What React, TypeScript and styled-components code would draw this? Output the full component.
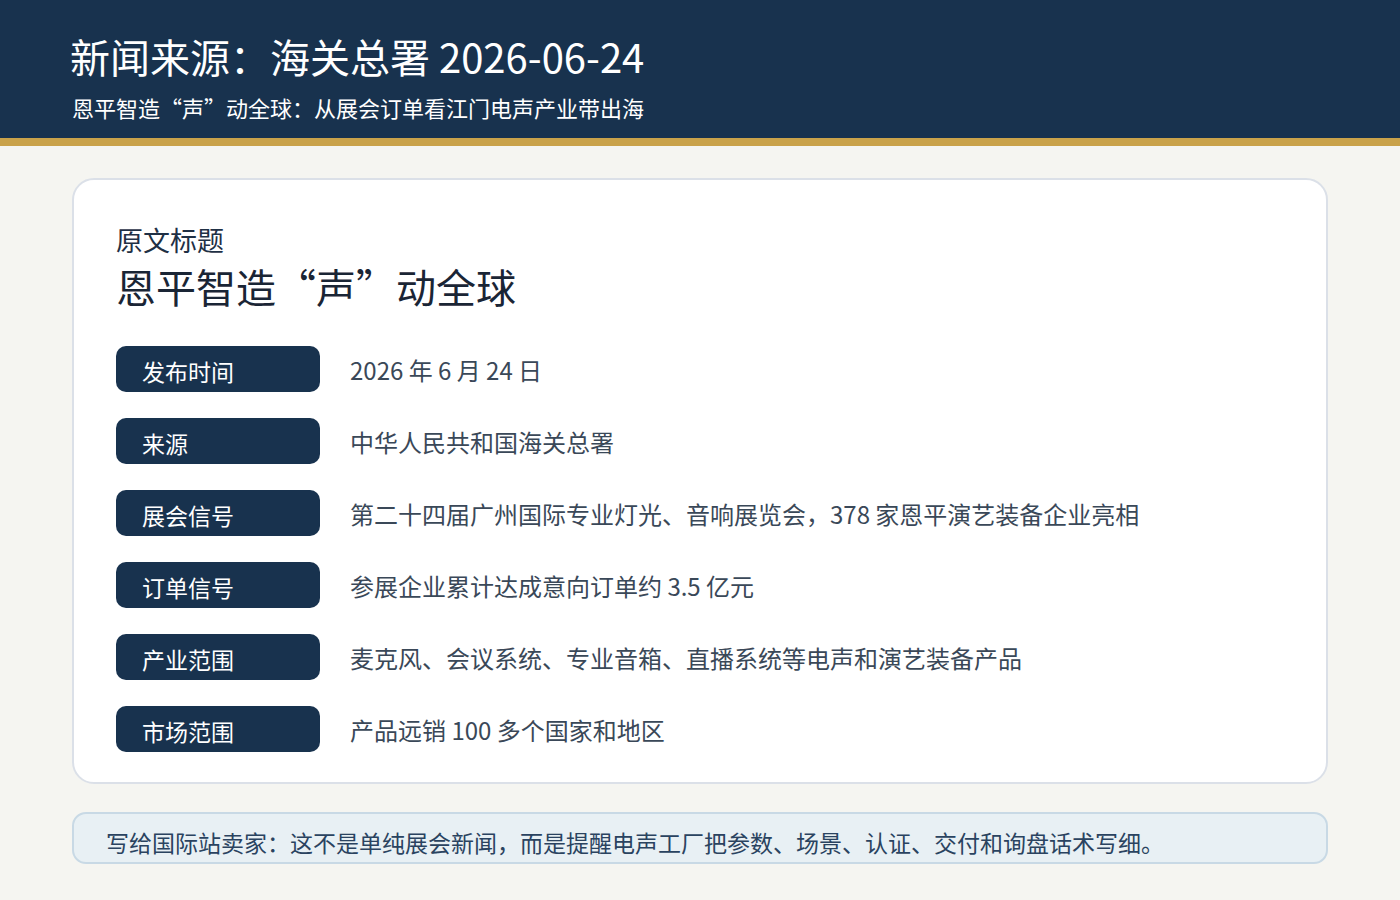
import React from 'react';
import styled, { createGlobalStyle } from 'styled-components';

const GlobalStyle = createGlobalStyle`
  * { box-sizing: border-box; }
  body {
    margin: 0;
    background: #f5f5f1;
    font-family: "Noto Sans CJK SC", "Noto Sans", sans-serif;
  }
`;

const rows: [string, string][] = [
  ['发布时间', '2026 年 6 月 24 日'],
  ['来源', '中华人民共和国海关总署'],
  ['展会信号', '第二十四届广州国际专业灯光、音响展览会，378 家恩平演艺装备企业亮相'],
  ['订单信号', '参展企业累计达成意向订单约 3.5 亿元'],
  ['产业范围', '麦克风、会议系统、专业音箱、直播系统等电声和演艺装备产品'],
  ['市场范围', '产品远销 100 多个国家和地区'],
];

const App = () => (
  <>
    <GlobalStyle />
    <Header>
      <HeaderTitle>新闻来源：海关总署 2026-06-24</HeaderTitle>
      <HeaderSub>恩平智造“声”动全球：从展会订单看江门电声产业带出海</HeaderSub>
    </Header>
    <Main>
      <Card>
        <Eyebrow>原文标题</Eyebrow>
        <Title>恩平智造“声”动全球</Title>
        <Rows>
          {rows.map(([k, v]) => (
            <Row key={k}>
              <Pill>{k}</Pill>
              <Value>{v}</Value>
            </Row>
          ))}
        </Rows>
      </Card>
      <Notice>写给国际站卖家：这不是单纯展会新闻，而是提醒电声工厂把参数、场景、认证、交付和询盘话术写细。</Notice>
    </Main>
  </>
);

const Header = styled.header`
  background: #18324e;
  border-bottom: 8px solid #c9a24a;
  padding: 28px 70px 16px;
  color: #fff;
`;

const HeaderTitle = styled.h1`
  margin: 0;
  font-size: 40px;
  font-weight: 400;
  line-height: 56px;
`;

const HeaderSub = styled.div`
  margin-top: 8px;
  font-size: 22px;
  line-height: 30px;
  padding-left: 2px;
`;

const Main = styled.main`
  padding: 32px 72px 0;
  display: flex;
  flex-direction: column;
  gap: 28px;
`;

const Card = styled.section`
  background: #fff;
  border: 2px solid #dbe0e8;
  border-radius: 22px;
  padding: 42px 42px 30px;
`;

const Eyebrow = styled.div`
  font-size: 27px;
  line-height: 36px;
  color: #1f3045;
`;

const Title = styled.h2`
  margin: 2px 0 0;
  font-size: 40px;
  font-weight: 400;
  line-height: 52px;
  color: #1a2535;
`;

const Rows = styled.div`
  margin-top: 34px;
  display: flex;
  flex-direction: column;
  gap: 26px;
`;

const Row = styled.div`
  display: flex;
  align-items: center;
  gap: 30px;
`;

const Pill = styled.div`
  width: 204px;
  height: 46px;
  flex-shrink: 0;
  background: #18324e;
  color: #fff;
  border-radius: 10px;
  padding-left: 26px;
  font-size: 23px;
  line-height: 50px;
`;

const Value = styled.div`
  font-size: 24px;
  color: #3a4858;
`;

const Notice = styled.div`
  background: #e8f0f4;
  border: 2px solid #c8d9e5;
  border-radius: 14px;
  padding: 0 32px;
  height: 52px;
  line-height: 56px;
  font-size: 23px;
  color: #2a4360;
`;

export default App;
